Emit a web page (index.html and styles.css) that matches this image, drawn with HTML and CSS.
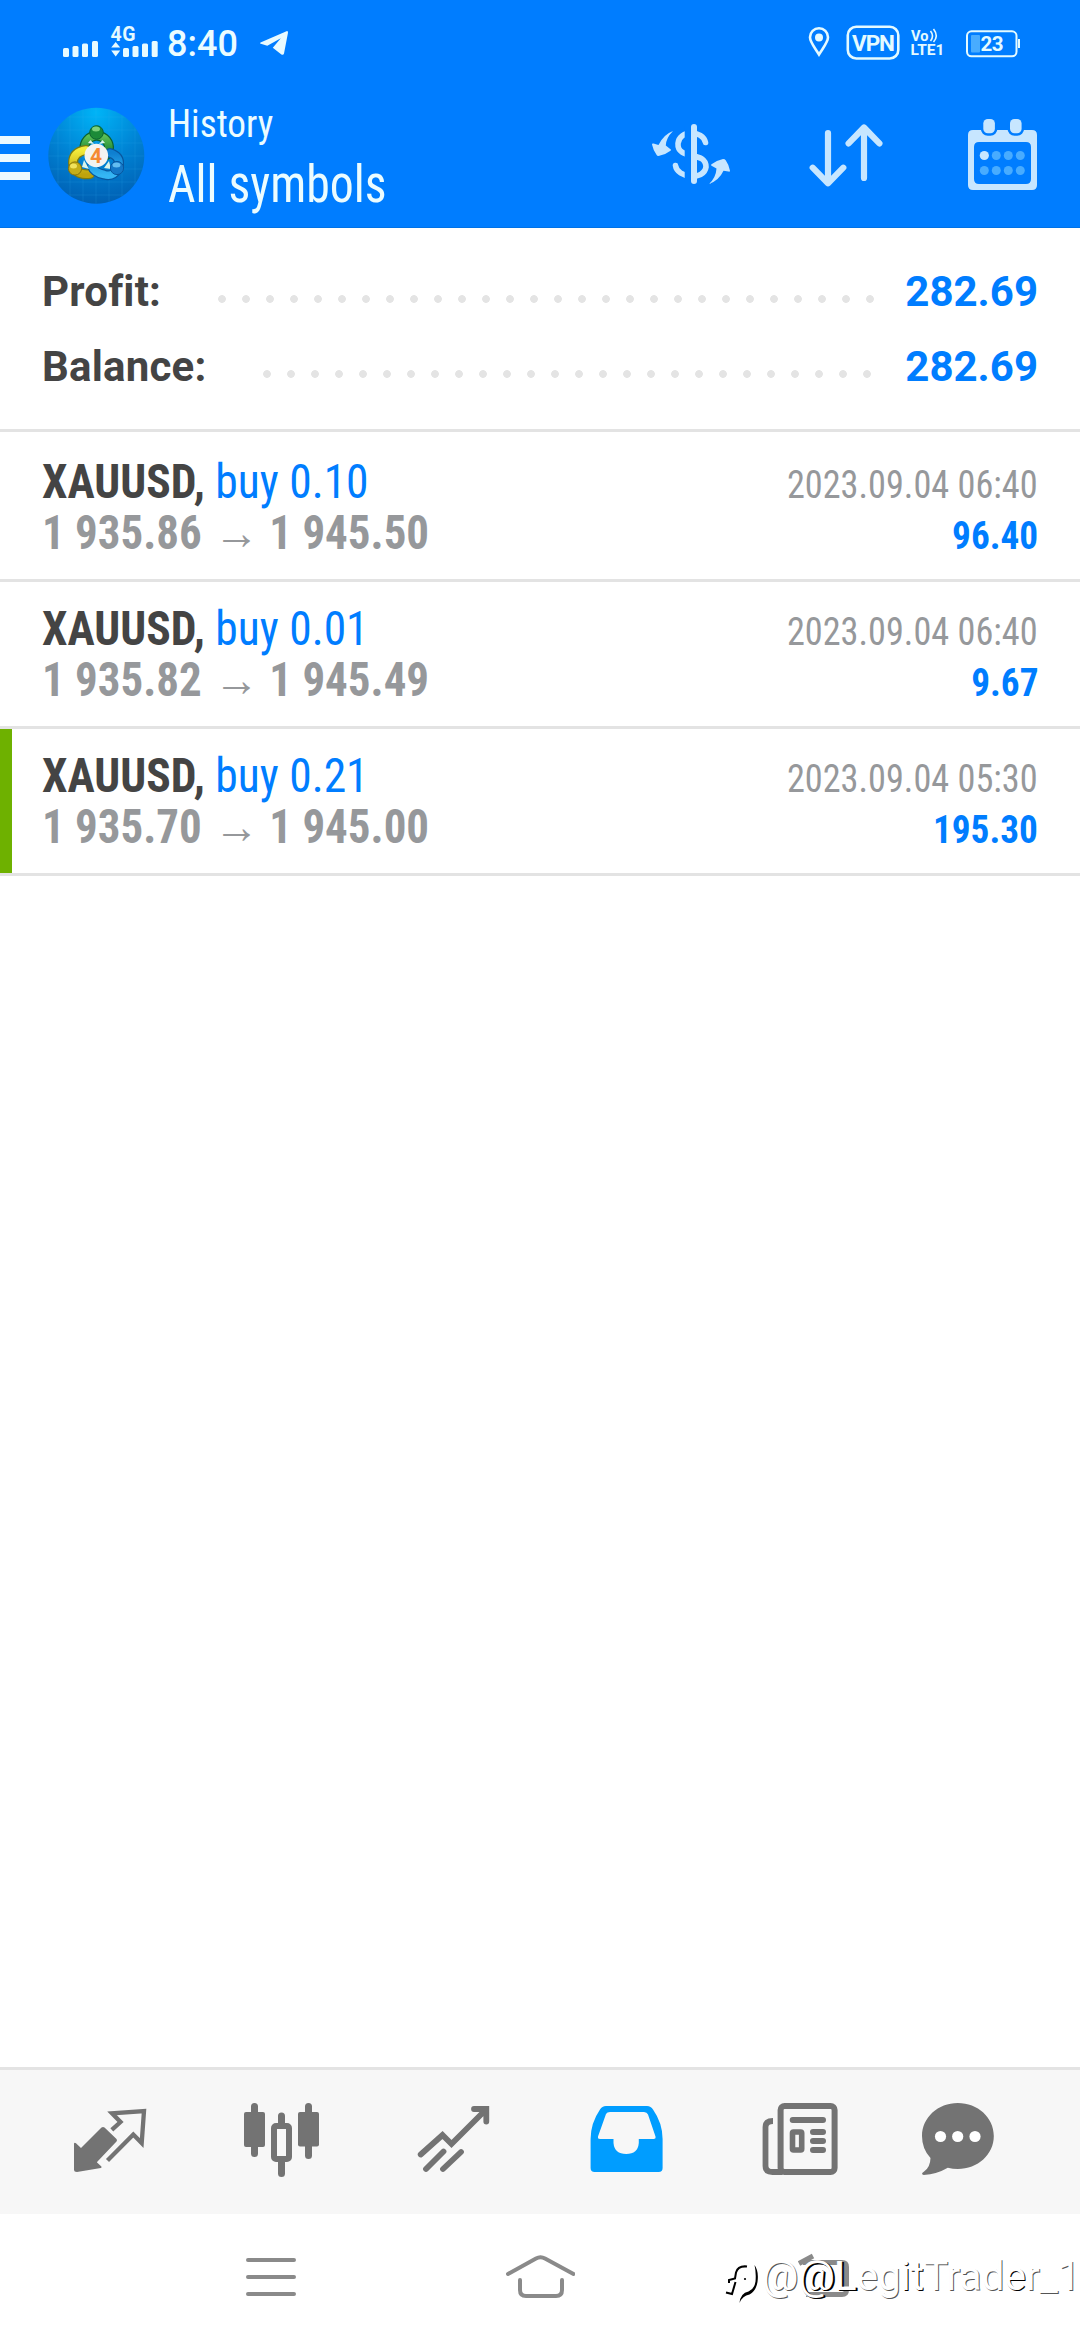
FILE: index.html
```html
<!DOCTYPE html>
<html lang="en">
<head>
<meta charset="utf-8">
<title>History</title>
<link rel="stylesheet" href="styles.css">
</head>
<body>
<header class="top">
  <div class="status">
    <svg class="signal" viewBox="60 20 100 44" width="100" height="44">
      <g fill="#e9fbff">
        <rect x="63" y="48" width="6" height="9" rx="1.5"/><rect x="72.5" y="46" width="6" height="11" rx="1.5"/><rect x="82" y="43.5" width="6" height="13.5" rx="1.5"/><rect x="92" y="41" width="6" height="16" rx="1.5"/>
        <path d="M115.700 42l4.500 5.500h-9zM111.200 50.500h9l-4.500 6z"/>
        <rect x="123" y="48" width="6" height="9" rx="1.500"/><rect x="132.500" y="46" width="6" height="11" rx="1.500"/><rect x="142" y="43.500" width="6" height="13.500" rx="1.500"/><rect x="151.700" y="41" width="6" height="16" rx="1.500"/>
      </g>
      <text class="svg-bold" x="110.500" y="41" font-size="19.500" textLength="25">4G</text>
    </svg>
    <span class="clock">8:40</span>
    <svg class="plane" viewBox="258 28 32 30" width="32" height="30"><path fill="#e9fbff" d="M260.500 42.500L286.500 31.200q1.700-.5 1.500 1.500L284 53.500q-.6 2-2.600 1l-8.600-6.700 8-9.500-13.500 7.500-6.500-2q-1.500-.6-.3-1.300z"/></svg>
    <svg class="tray" viewBox="805 22 220 40" width="220" height="40">
      <path d="M819 54.500C814 46.500 810 42 810 37.300a9 9 0 0 1 18 0C828 42 824 46.500 819 54.500z" fill="none" stroke="#e4faff" stroke-width="2.600"/>
      <circle cx="819" cy="37.500" r="4" fill="#e4faff"/>
      <rect x="847.800" y="26.800" width="50.500" height="31.700" rx="8.500" fill="none" stroke="#e4faff" stroke-width="2.600"/>
      <text class="svg-bold" x="852" y="51" font-size="22.500" textLength="43">VPN</text>
      <text class="svg-bold" x="911" y="40.500" font-size="14.500">Vo</text>
      <path d="M930.500 31q4 5 0 10M933.500 29q5.500 7 0 13" fill="none" stroke="#e4faff" stroke-width="1.600"/>
      <text class="svg-bold" x="910.500" y="55" font-size="15.500" textLength="34">LTE1</text>
      <rect x="967" y="31.300" width="49.500" height="25" rx="4.500" fill="none" stroke="#e4faff" stroke-width="2"/>
      <rect x="971" y="35" width="9" height="17.500" rx="1" fill="#48acff"/>
      <path d="M1019 39v9" stroke="#e4faff" stroke-width="2"/>
      <text class="svg-bold" x="980.500" y="51" font-size="20.500" textLength="23">23</text>
    </svg>
  </div>
  <div class="appbar">
    <svg class="burger" viewBox="0 0 30 44" width="30" height="44"><path d="M0 4h30M0 22h30M0 40h30" stroke="#edfaff" stroke-width="8"/></svg>
    <svg class="logo" viewBox="48 107 97 97" width="97" height="97">
      <defs>
        <radialGradient id="bg" cx=".5" cy=".05" r="1"><stop offset="0" stop-color="#00b4f7"/><stop offset=".5" stop-color="#0083d4"/><stop offset="1" stop-color="#005cb0"/></radialGradient>
        <linearGradient id="gr" x2="0" y2="1"><stop offset="0" stop-color="#5cc055"/><stop offset="1" stop-color="#127a30"/></linearGradient>
        <linearGradient id="ye" x2="0" y2="1"><stop offset="0" stop-color="#f4ec3c"/><stop offset="1" stop-color="#bfa30c"/></linearGradient>
        <linearGradient id="bl" x2="0" y2="1"><stop offset="0" stop-color="#0e7fd0"/><stop offset="1" stop-color="#35b6f4"/></linearGradient>
        <clipPath id="disc"><circle cx="96.300" cy="155.700" r="48"/></clipPath>
      </defs>
      <circle cx="96.300" cy="155.700" r="48" fill="url(#bg)"/>
      <path clip-path="url(#disc)" d="M58 107v97M70 107v97M83 107v97M96 107v97M109 107v97M122 107v97M135 107v97M48 117h97M48 130h97M48 143h97M48 156h97M48 169h97M48 182h97M48 195h97" stroke="#35b3ee" stroke-opacity=".16" fill="none"/>
      <g stroke-linecap="round" fill="none">
        <path d="M84.500 149a12 12 0 1 1 24.500-2q0 5-2.500 8" stroke="#0b6230" stroke-width="10"/>
        <path d="M84.500 149a12 12 0 1 1 24.500-2q0 5-2.500 8" stroke="url(#gr)" stroke-width="7.500"/>
        <path d="M86 150q-13 2-13 13 2 13 17 11" stroke="#7a7a12" stroke-width="10"/>
        <path d="M86 150q-13 2-13 13 2 13 17 11" stroke="url(#ye)" stroke-width="7.500"/>
        <path d="M110 153q10 3 9 12-4 13-15 9.500-10-2-12-8" stroke="#08579f" stroke-width="10"/>
        <path d="M110 153q10 3 9 12-4 13-15 9.500-10-2-12-8" stroke="url(#bl)" stroke-width="7.500"/>
      </g>
      <path d="M88 143l2.500-3 3.500 4zM105 143l-2.500-3-3.500 4zM82 167l2-7 5 9zM104 168l5-7 2 8z" fill="#d9f3ea"/>
      <circle cx="96.500" cy="132.500" r="6.800" fill="#1b8a38" stroke="#0b6230"/><ellipse cx="96" cy="129" rx="4" ry="2.500" fill="#7dd07c"/>
      <circle cx="75" cy="168.500" r="6.600" fill="#c4ae18" stroke="#84720c"/><ellipse cx="73.500" cy="166" rx="3.500" ry="2.500" fill="#f0e25c"/>
      <circle cx="117" cy="168" r="6.600" fill="#1478c8" stroke="#08579f"/><ellipse cx="116.500" cy="165" rx="4" ry="2.500" fill="#63bdf0"/>
      <circle cx="96.300" cy="155.500" r="11.800" fill="#f3f3f1"/>
      <text x="96" y="163" text-anchor="middle" class="four">4</text>
    </svg>
    <div class="titles">
      <span class="title-small cond">History</span>
      <span class="title-big cond">All symbols</span>
    </div>
    <div class="actions">
      <svg viewBox="645 110 90 90" width="90" height="90">
        <path d="M704.500 142.500C702 130 678 129.500 677 143.500C676 161 705 150 705 167C703 181 676 178 674.500 165.500" fill="none" stroke="#c7e6ff" stroke-width="5.600" stroke-linecap="round"/>
        <path d="M687 126v56" stroke="#007dff" stroke-width="6.600"/>
        <path d="M693 127v54" stroke="#c7e6ff" stroke-width="6" stroke-linecap="round"/>
        <path fill="#c7e6ff" d="M672 131q-7 7-7.200 14.500l5 4q.6.600-.3 1.200-5 4-12 5.300-1.500 0-2-1.300-3.500-5-4.500-10.200 0-1.500 1.500-1l5 1.500q5-10.500 14.500-14z"/>
        <path fill="#c7e6ff" d="M708 184q7-6.500 7.500-15.500l-5-2.700q-1-.8 0-1.500 5-4 11.500-5.300 2 0 2.700 1.300 3.500 5 4.300 10.400 0 1.300-1.500.9l-5-.8q-4.500 9.700-14.500 13.200z"/>
      </svg>
      <svg viewBox="802 110 90 90" width="90" height="90"><path d="M828 133v50M812.700 167.700L828 183.300l15.300-15.600M864 178v-50M848.600 143.400L864 127.500l15.400 15.900" fill="none" stroke="#c7e6ff" stroke-width="6.200" stroke-linecap="round" stroke-linejoin="round"/></svg>
      <svg viewBox="958 110 90 90" width="90" height="90">
        <path fill="#c7e6ff" fill-rule="evenodd" d="M973 130h59q5 0 5 5v50q0 5-5 5h-59q-5 0-5-5v-50q0-5 5-5zM979 142q-5 0-5 5v32q0 5 5 5h47q5 0 5-5v-32q0-5-5-5z"/>
        <g fill="#c7e6ff" stroke="#007dff" stroke-width="5" paint-order="stroke"><rect x="983.300" y="119" width="11.600" height="14.300" rx="4.500"/><rect x="1010" y="119" width="11.600" height="14.300" rx="4.500"/></g>
        <circle cx="984.300" cy="155.500" r="4.600" fill="#c7e6ff"/>
        <g fill="#48acff"><circle cx="996.300" cy="155.500" r="4.500"/><circle cx="1008.300" cy="155.500" r="4.500"/><circle cx="1020.300" cy="155.500" r="4.500"/><circle cx="984.300" cy="170.500" r="4.500"/><circle cx="996.300" cy="170.500" r="4.500"/><circle cx="1008.300" cy="170.500" r="4.500"/><circle cx="1020.300" cy="170.500" r="4.500"/></g>
      </svg>
    </div>
  </div>
</header>

<section class="summary">
  <div class="sum-row"><span class="sum-label">Profit:</span><i class="dots dots-profit"></i><span class="sum-value">282.69</span></div>
  <div class="sum-row"><span class="sum-label">Balance:</span><i class="dots dots-balance"></i><span class="sum-value">282.69</span></div>
</section>

<main class="deals">
  <article class="deal">
    <div class="line"><span class="name cond"><b>XAUUSD,</b> <span class="buy">buy 0.10</span></span><time class="date cond">2023.09.04 06:40</time></div>
    <div class="line"><span class="price cond">1 935.86<span class="arrow">→</span>1 945.50</span><b class="gain cond">96.40</b></div>
  </article>
  <article class="deal">
    <div class="line"><span class="name cond"><b>XAUUSD,</b> <span class="buy">buy 0.01</span></span><time class="date cond">2023.09.04 06:40</time></div>
    <div class="line"><span class="price cond">1 935.82<span class="arrow">→</span>1 945.49</span><b class="gain cond">9.67</b></div>
  </article>
  <article class="deal marked">
    <div class="line"><span class="name cond"><b>XAUUSD,</b> <span class="buy">buy 0.21</span></span><time class="date cond">2023.09.04 05:30</time></div>
    <div class="line"><span class="price cond">1 935.70<span class="arrow">→</span>1 945.00</span><b class="gain cond">195.30</b></div>
  </article>
</main>

<nav class="tabs">
  <svg viewBox="60 40 100 100" width="100" height="100">
    <path fill="#737373" d="M74 93.500q.5-1.200 2-.2L81 98l20.500-20.500q1.500-1 3 0L116.500 89q1 1.300 0 2.500L96.800 112.300l4.600 4.200q.6 1-.6 1.500L77 122q-3 0-3-2.500z"/>
    <path d="M111.800 79.800l8.700-7.800-8.500-8.700 32-2.300-2.300 32-8.400-8.500L107.500 110.500" fill="none" stroke="#737373" stroke-width="4.300"/>
  </svg>
  <svg viewBox="230 40 100 100" width="100" height="100">
    <path d="M254.500 56.500v47M281.500 66v10M281.500 110v13.500M308.500 56.500v49" stroke="#737373" stroke-width="7" stroke-linecap="round"/>
    <g fill="#737373"><rect x="244" y="62" width="21" height="35" rx="2"/><rect x="298" y="62" width="21" height="34.500" rx="2"/></g>
    <rect x="274" y="76" width="15" height="33" rx="2" fill="#f7f7f7" stroke="#737373" stroke-width="6"/>
  </svg>
  <svg viewBox="400 40 100 100" width="100" height="100">
    <path d="M420.700 104.500l21.800-19.500 9 9L486 59.500M474 59h12.300v12.500M426 119l17.500-17.500M443 119l18-17" fill="none" stroke="#737373" stroke-width="5.800" stroke-linecap="round"/>
  </svg>
  <svg viewBox="570 40 100 100" width="100" height="100">
    <path fill="#009dff" fill-rule="evenodd" d="M606 56h41q4 0 6 3.500Q662.500 73 662.600 89v29q0 4-4 4h-64q-4 0-4-4V89Q590.700 73 600 59.500q2-3.500 6-3.500zM610 62q-3 0-4 2L598 86.500q-.5 2.500 2 2.500h13.500v4q1 11 12.700 11t12.600-11v-4H653.500q2.500 0 2-2.500L648 64.500q-1-2.500-4-2.500z"/>
  </svg>
  <svg viewBox="740 40 100 100" width="100" height="100">
    <rect x="780.600" y="56" width="54" height="66" rx="4" fill="none" stroke="#737373" stroke-width="6"/>
    <path d="M773 71q-7.500 0-7.500 6v39q0 6 7 6h10" fill="none" stroke="#737373" stroke-width="5.800"/>
    <path d="M792.700 70H823M813 82h10M813 91h10M813 100h10" stroke="#737373" stroke-width="6" stroke-linecap="round"/>
    <rect x="792.500" y="82" width="9.200" height="18" rx="1" fill="none" stroke="#737373" stroke-width="5.600"/>
  </svg>
  <svg viewBox="910 40 100 100" width="100" height="100">
    <path fill="#737373" d="M957.800 53c20 0 36 14.500 36 33s-16 33-36 33q-5 0-10-1.200-11 6.500-24 7.200-3.500-1 0-3.200 6.500-4.300 6.700-13.800Q922 99 922 86c0-18.500 16-33 35.800-33z"/>
    <g fill="#fff"><circle cx="940.500" cy="86.500" r="5.600"/><circle cx="957.700" cy="86.500" r="5.600"/><circle cx="975" cy="86.500" r="5.600"/></g>
  </svg>
</nav>

<footer class="sysnav">
  <svg viewBox="240 195 70 60" width="70" height="60"><path d="M248 210h46M248 227h46M248 244h46" stroke="#8a8a8a" stroke-width="4" stroke-linecap="round"/></svg>
  <svg viewBox="505 195 70 60" width="70" height="60"><path d="M508 224l28-15.500q4.500-2.500 9 0L573.500 224M520 230v10q0 6 6 6h30q6 0 6-6v-10" fill="none" stroke="#8a8a8a" stroke-width="4" stroke-linecap="round"/></svg>
  <svg viewBox="790 195 70 60" width="70" height="60"><path d="M799 213.500l14-7.500M803 212.500h39q4.500 0 4.500 4.500v23q0 4.500-4.500 4.500h-36" fill="none" stroke="#8a8a8a" stroke-width="5"/></svg>
  <div class="watermark">
    <svg viewBox="720 205 48 50" width="48" height="50">
      <path d="M747 216.500q-9-1-11 6l-1 6-6 1.500v3M735.500 232l-3.500 12-6-1.500" fill="none" stroke="#000" stroke-width="2"/>
      <circle cx="745" cy="229" r="1.100"/>
      <path d="M754.500 215q4.500 6 3 17-1.500 9-8 12.500-7 1-10 8.500 1-10 9-11.500 6-2.500 7-10 .8-9-1-16.500z"/>
    </svg>
    <span class="mark-at">@</span><span class="mark-name"><span class="mark-dark">@L</span>eg<span class="mark-mid">it</span>Trad<span class="mark-mid">e</span>r_1</span>
  </div>
</footer>
</body>
</html>
```
FILE: styles.css
```css
* { box-sizing: border-box; }
body {
  margin: 0;
  width: 1080px;
  height: 2340px;
  display: flex;
  flex-direction: column;
  background: #fff;
  font-family: Roboto, sans-serif;
  overflow: hidden;
}
svg { display: block; flex: none; }
.cond {
  font-family: "Roboto Condensed", Roboto, sans-serif;
  font-stretch: 75%;
  white-space: nowrap;
  transform-origin: 0 50%;
}
.svg-bold { font-family: Roboto, sans-serif; font-weight: 700; fill: #e4faff; }
.four { font: 700 21px Roboto, sans-serif; fill: #f58a33; }

.top { height: 228px; background: #007dff; color: #ebfcff; border-bottom: 1px solid #0072e6; flex: none; }
.status { height: 84px; display: flex; align-items: flex-start; padding: 20px 55px 0 60px; }
.clock { font-size: 36px; font-weight: 500; line-height: 44px; margin: 2px 0 0 7px; width: 91px; }
.plane { margin-top: 8px; }
.tray { margin: 2px 0 0 auto; }
.appbar { height: 144px; display: flex; padding-right: 32px; }
.burger { margin-top: 52px; }
.logo { margin: 23px 0 0 18px; }
.titles { display: flex; flex-direction: column; align-items: flex-start; margin: 15px 0 0 23px; }
.title-small { font-size: 39px; line-height: 50px; transform: scaleX(.955); }
.title-big { font-size: 51px; line-height: 60px; margin-top: 6px; transform: scaleX(.937); }
.actions { display: flex; gap: 66px; margin: 26px 0 0 auto; }

.summary { height: 204px; border-bottom: 3px solid #e3e3e3; padding: 26px 42px 0; flex: none; }
.sum-row { display: flex; height: 75px; align-items: flex-start; justify-content: space-between; font-size: 42px; font-weight: 700; line-height: 75px; }
.sum-label { color: #444; letter-spacing: .2px; }
.sum-value { color: #007dff; }
.dots {
  height: 8px;
  margin: 41px 0 0 auto;
  background: radial-gradient(circle at 4px 4px, #e4e4e4 3.5px, transparent 4.2px) 0 0 / 24px 8px repeat-x;
}
.dots-profit { width: 656px; margin-right: 31px; }
.dots-balance { width: 608px; margin-right: 34px; }

.deals { padding-top: 3px; flex: 1; }
.deal { height: 147px; border-bottom: 3px solid #e3e3e3; padding: 21px 42px 0; }
.marked { background: linear-gradient(#6eb100, #6eb100) 0 0 / 12px 100% no-repeat; }
.line { display: flex; justify-content: space-between; align-items: baseline; height: 51px; line-height: 51px; }
.name { font-size: 48px; color: #444; transform: scaleX(.948); }
.buy { color: #007dff; }
.date { font-size: 39px; color: #96989b; transform: scaleX(.93); transform-origin: 100% 50%; }
.price { font-size: 48px; font-weight: 700; color: #96989b; transform: scaleX(.937); }
.gain { font-size: 39px; color: #007dff; transform: scaleX(.955); transform-origin: 100% 50%; }
.arrow { display: inline-block; font: 400 48px/40px "Liberation Sans", sans-serif; margin: 0 11px 0 13px; }

.tabs { height: 147px; border-top: 3px solid #e3e3e3; background: #f7f7f7; display: flex; gap: 70px; padding: 20px 60px; flex: none; }

.sysnav { position: relative; height: 126px; background: #fff; display: flex; justify-content: flex-start; gap: 195px; padding: 31px 0 0 240px; flex: none; }
.sysnav > svg:nth-child(3) { margin-left: 20px; }
.watermark { position: absolute; left: 720px; top: 41px; display: flex; white-space: nowrap; color: #fff; font: 400 40.5px/42px Roboto, sans-serif; text-shadow: 1px 1px 0 #555; }
.mark-at { margin-left: -6px; }
.mark-dark { text-shadow: 1px 1px 0 #000, 2px 1px 0 #000, -1px 0 0 #fff; }
.mark-mid { text-shadow: 1px 1px 0 #000; }
```
